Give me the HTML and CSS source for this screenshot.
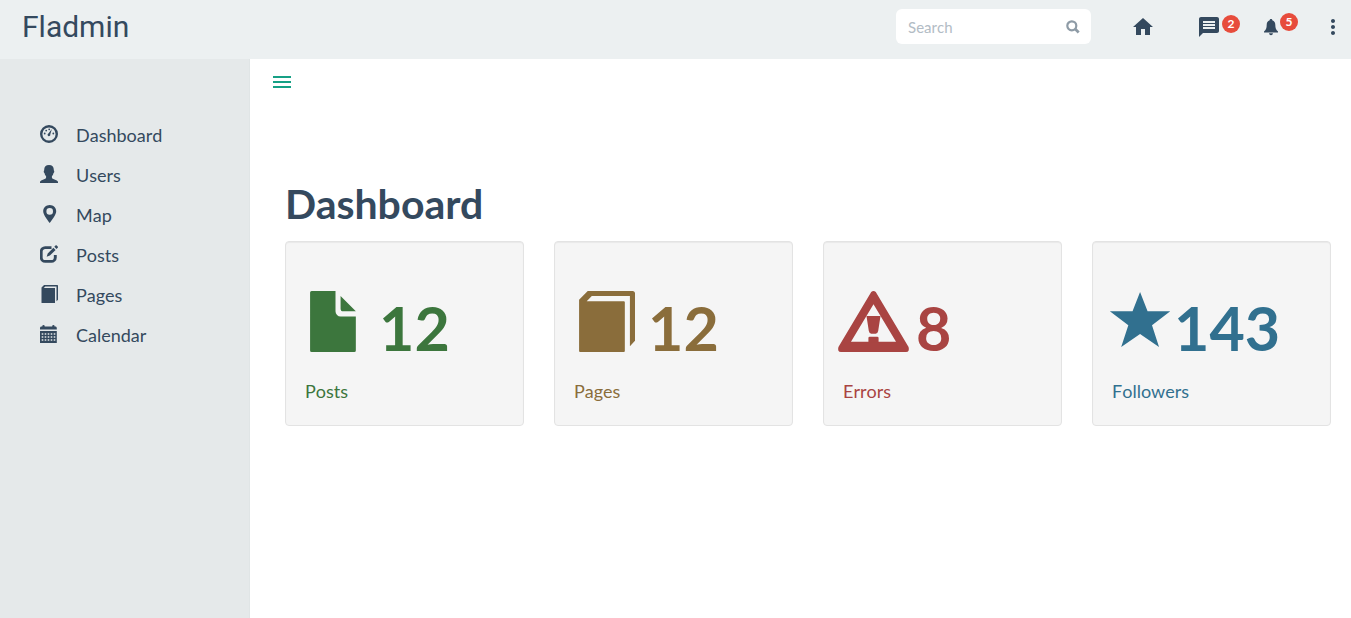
FILE: index.html
```html
<!DOCTYPE html>
<html lang="en">
<head>
<meta charset="utf-8">
<meta name="viewport" content="width=device-width, initial-scale=1">
<title>Fladmin</title>
<link rel="stylesheet" href="styles.css">
</head>
<body>
<header class="topbar">
  <a class="brand" href="#">Fladmin</a>
  <form class="search">
    <input class="search-input" type="text" placeholder="Search" aria-label="Search">
    <button class="search-button" type="button" aria-label="Submit search">
      <svg width="14" height="14" viewBox="0 0 14 14"><circle cx="5.800" cy="5.800" r="4.500" fill="none" stroke="currentColor" stroke-width="2.200"/><path d="M9 8.800l3.700 3.700" fill="none" stroke="currentColor" stroke-width="2.800"/></svg>
    </button>
  </form>
  <nav class="actions" aria-label="Shortcuts">
    <a class="action home" href="#" aria-label="Home">
      <svg width="24" height="24" viewBox="0 0 24 24"><path d="M10 20v-6h4v6h5v-8h3L12 3 2 12h3v8z"/></svg>
    </a>
    <a class="action messages" href="#" aria-label="Messages">
      <svg width="24" height="24" viewBox="0 0 24 24"><path d="M20 2H4c-1.1 0-1.99.9-1.99 2L2 22l4-4h14c1.1 0 2-.9 2-2V4c0-1.1-.9-2-2-2zm-2 12H6v-2h12v2zm0-3H6V9h12v2zm0-3H6V6h12v2z"/></svg>
      <span class="badge">2</span>
    </a>
    <a class="action alerts" href="#" aria-label="Notifications">
      <svg class="bell" width="14" height="17" viewBox="0 0 14 17"><path d="M7 0c.8 0 1.300.5 1.300 1.200C10.400 1.900 11.300 3.500 11.300 5.800c0 3.400.700 5 2.700 6.800v1H0v-1c2-1.800 2.700-3.400 2.700-6.800 0-2.300.900-3.900 3-4.600C5.700.500 6.200 0 7 0zM5 14.300h4c-.2 1.200-1 2-2 2s-1.800-.8-2-2z"/></svg>
      <span class="badge">5</span>
    </a>
    <button class="action more" type="button" aria-label="More options">
      <svg width="24" height="24" viewBox="0 0 24 24"><path d="M12 8c1.100 0 2-.9 2-2s-.9-2-2-2-2 .9-2 2 .9 2 2 2zm0 2c-1.100 0-2 .9-2 2s.9 2 2 2 2-.9 2-2-.9-2-2-2zm0 6c-1.100 0-2 .9-2 2s.9 2 2 2 2-.9 2-2-.9-2-2-2z"/></svg>
    </button>
  </nav>
</header>
<div class="layout">
  <nav class="sidebar" aria-label="Main">
    <a class="nav-link" href="#">
      <svg class="nav-icon" viewBox="0 0 18 18"><circle cx="9" cy="9" r="7.800" fill="none" stroke="currentColor" stroke-width="2.400"/><path d="M11.900 3.900L10.300 9.300a1.400 1.400 0 1 1-1.900-.8z"/><circle cx="4.700" cy="8.500" r=".9"/><circle cx="6.200" cy="5.600" r=".9"/><circle cx="9.200" cy="4.300" r=".9"/><circle cx="13.300" cy="8.500" r=".9"/></svg>
      Dashboard
    </a>
    <a class="nav-link" href="#">
      <svg class="nav-icon" viewBox="0 0 18 18"><path d="M9 0c3.200 0 4.800 1.900 4.800 4.700 0 .6.100.9.400 1.200.2.500-.1 1.800-.7 2.200-.3 1.500-.8 2.500-1.600 3.200v1.300c0 .6.300.9.900 1.200l4 1.700c.8.400 1.200.9 1.200 1.600v.9H0v-.9c0-.7.400-1.200 1.200-1.600l4-1.700c.6-.3.900-.6.900-1.200v-1.300c-.8-.7-1.300-1.700-1.600-3.200-.6-.4-.9-1.700-.7-2.200.3-.3.400-.6.400-1.200C4.200 1.900 5.800 0 9 0z"/></svg>
      Users
    </a>
    <a class="nav-link" href="#">
      <svg class="nav-icon" viewBox="0 0 18 18"><path fill-rule="evenodd" d="M9.700 0c3.700 0 6.500 2.800 6.500 6.300 0 3.200-3.300 7.600-6.500 11.700C6.500 13.900 3.200 9.500 3.200 6.300 3.200 2.800 6 0 9.700 0zm0 3.100a3.300 3.300 0 1 0 0 6.600 3.300 3.300 0 0 0 0-6.600z"/></svg>
      Map
    </a>
    <a class="nav-link" href="#">
      <svg class="nav-icon" viewBox="0 0 18 18"><path d="M11.500 2.600H5.200a4 4 0 0 0-4 4v5.800a4 4 0 0 0 4 4h6.100a4 4 0 0 0 4-4V10" fill="none" stroke="currentColor" stroke-width="2.900"/><path d="M6.700 11.700l1-3.300 5.700-5.700 2.200 2.200L9.900 10.600zM14.300 1.800l1.200-1.200c.4-.4.800-.4 1.200 0l1 1c.4.400.4.800 0 1.200l-1.200 1.200z"/></svg>
      Posts
    </a>
    <a class="nav-link" href="#">
      <svg class="nav-icon" viewBox="0 0 1200 1200"><path d="M100 1190V170L270 0h880q50 0 50 50v930l-100 105V100H350L250 200h750v990q0 10-10 10H110q-10 0-10-10z"/></svg>
      Pages
    </a>
    <a class="nav-link" href="#">
      <svg class="nav-icon" viewBox="0 0 18 18"><path fill-rule="evenodd" d="M0 4.500V3.200C0 2.200.6 1.600 1.500 1.600H2.300V1.200a1.200 1.200 0 0 1 2.400 0v.4h7.500v-.4a1.200 1.200 0 0 1 2.400 0v.4h.7c.9 0 1.500.6 1.500 1.600v1.300zM0 6h16.800v12H0zM1.700 8.200v1.600h1.600V8.200zm3 0v1.600h1.600V8.200zm3 0v1.600h1.600V8.200zm3 0v1.600h1.600V8.200zm3 0v1.600h1.600V8.200zm-12 3v1.600h1.600v-1.600zm3 0v1.600h1.600v-1.600zm3 0v1.600h1.600v-1.600zm3 0v1.600h1.600v-1.600zm3 0v1.600h1.600v-1.600zm-12 3v1.600h1.600v-1.600zm3 0v1.600h1.600v-1.600zm3 0v1.600h1.600v-1.600zm3 0v1.600h1.600v-1.600zm3 0v1.600h1.600v-1.600z"/></svg>
      Calendar
    </a>
  </nav>
  <main class="main">
    <button class="menu-toggle" type="button" aria-label="Toggle menu">
      <svg width="24" height="24" viewBox="0 0 24 24"><path d="M3 18h18v-2H3v2zm0-5h18v-2H3v2zm0-7v2h18V6H3z"/></svg>
    </button>
    <h1 class="title">Dashboard</h1>
    <div class="cards">
      <section class="card posts">
        <div class="stat">
          <svg class="stat-icon" viewBox="0 0 1200 1200"><path d="M130 0h470v400q0 40 30 70t70 30h300v670q0 30-30 30H130q-30 0-30-30V30q0-30 30-30zM700 100l300 300H750q-50 0-50-50z"/></svg>
          <span class="stat-value">12</span>
        </div>
        <a class="card-label" href="#">Posts</a>
      </section>
      <section class="card pages">
        <div class="stat">
          <svg class="stat-icon" viewBox="0 0 1200 1200"><path d="M100 1180V170L270 0h880q50 0 50 50v930l-100 105V100H350L250 200h730q20 0 20 20v960q0 20-20 20H120q-20 0-20-20z"/></svg>
          <span class="stat-value">12</span>
        </div>
        <a class="card-label" href="#">Pages</a>
      </section>
      <section class="card errors">
        <div class="stat">
          <svg class="stat-icon" viewBox="0 0 1200 1200"><path fill-rule="evenodd" d="M555 22q45-44 90 0l645 1080q25 98-50 98H-40q-75 0-50-98zM600 262L157 998h886z"/><path d="M462 492h276l-46 295q-10 53-50 53h-84q-40 0-50-53zM525 900h150q25 0 25 25v85H500v-85q0-25 25-25z"/></svg>
          <span class="stat-value">8</span>
        </div>
        <a class="card-label" href="#">Errors</a>
      </section>
      <section class="card followers">
        <div class="stat">
          <svg class="stat-icon" viewBox="0 0 1200 1200"><path d="M552 20l148 380h446L787 675l138 427-373-256-371 256 140-427L-42 400h446z"/></svg>
          <span class="stat-value">143</span>
        </div>
        <a class="card-label" href="#">Followers</a>
      </section>
    </div>
  </main>
</div>
</body>
</html>
```

FILE: styles.css
```css
* {
  box-sizing: border-box;
}

body {
  margin: 0;
  min-height: 100vh;
  display: flex;
  flex-direction: column;
  background: #fff;
  color: #34495e;
  font-family: Lato, "Liberation Sans", sans-serif;
  font-size: 18px;
  line-height: 30px;
  font-kerning: none;
}

a {
  color: inherit;
  text-decoration: none;
}

button {
  padding: 0;
  border: 0;
  background: none;
  color: inherit;
  cursor: pointer;
}

svg {
  display: block;
  flex: none;
  fill: currentColor;
}

.topbar {
  display: flex;
  align-items: center;
  min-height: 59px;
  padding: 0 6px 5px 22px;
  background: #ecf0f1;
}

.brand {
  margin-right: auto;
  font-family: Roboto, "Liberation Sans", sans-serif;
  font-size: 30px;
  line-height: 36px;
}

.search {
  display: flex;
  align-items: center;
  width: 195px;
  height: 35px;
  margin-bottom: 1px;
  padding: 0 11px 0 12px;
  border-radius: 6px;
  background: #fff;
}

.search-input {
  flex: 1;
  min-width: 0;
  padding: 0;
  border: 0;
  outline: 0;
  background: none;
  color: inherit;
  font-family: inherit;
  font-size: 15px;
  line-height: 24px;
  font-kerning: none;
}

.search-input::placeholder {
  color: #b2bcc5;
  opacity: 1;
}

.search-button {
  color: #8e9ba6;
}

.actions {
  display: flex;
  align-items: center;
}

.action {
  display: flex;
}

.home {
  margin-left: 40px;
}

.messages {
  margin-left: 42px;
  gap: 1px;
}

.alerts {
  margin-left: 24px;
  gap: 2px;
  align-items: center;
}

.more {
  margin-left: 23px;
}

.badge {
  width: 18px;
  height: 18px;
  border-radius: 50%;
  background: #e74c3c;
  color: #fff;
  font-size: 12px;
  font-weight: 700;
  line-height: 18px;
  text-align: center;
}

.alerts .badge {
  margin-bottom: 10px;
}

.layout {
  flex: 1;
  display: flex;
}

.sidebar {
  flex: none;
  width: 250px;
  padding: 56px 20px 20px 40px;
  border-right: 1px solid #e0e5e6;
  background: #e5e9ea;
}

.nav-link {
  display: flex;
  align-items: center;
  gap: 18px;
  line-height: 40px;
}

.nav-icon {
  width: 18px;
  height: 18px;
  margin-bottom: 2px;
}

.main {
  flex: 1;
  min-width: 0;
  padding: 11px 20px 20px 35px;
}

.menu-toggle {
  display: block;
  margin-left: -15px;
  color: #16a085;
}

.title {
  margin: 85px 0 13px;
  font-size: 41px;
  font-weight: 700;
  line-height: 49px;
  font-kerning: normal;
}

.cards {
  display: grid;
  grid-template-columns: repeat(4, minmax(0, 1fr));
  gap: 30px;
}

.card {
  padding: 49px 19px 19px;
  border: 1px solid #e3e3e3;
  border-radius: 4px;
  background: #f5f5f5;
  box-shadow: inset 0 1px 1px rgba(0, 0, 0, 0.05);
}

.stat {
  display: flex;
  gap: 13px;
  margin-bottom: 18px;
}

.stat-icon {
  width: 61px;
  height: 61px;
  overflow: visible;
}

.stat-value {
  padding-top: 6px;
  font-size: 61px;
  font-weight: 700;
  line-height: 61px;
}

.card-label {
  display: block;
}

.posts {
  color: #3c763d;
}

.pages {
  color: #8a6d3b;
}

.errors {
  color: #a94442;
}

.followers {
  color: #31708f;
}

.errors .stat {
  gap: 12px;
}

.followers .stat {
  gap: 1px;
}
```
